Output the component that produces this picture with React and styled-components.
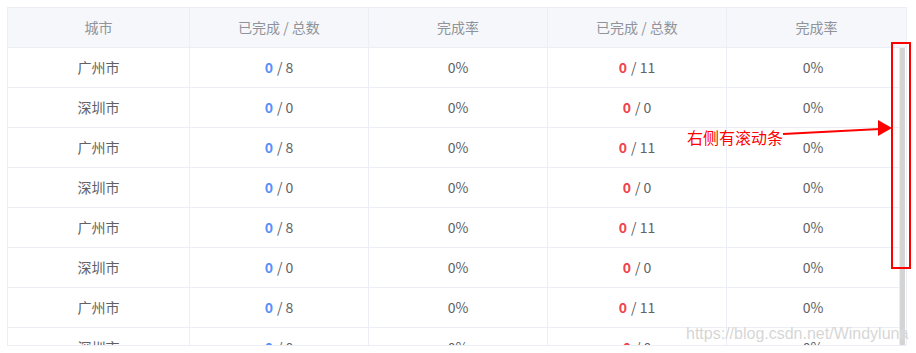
import React from "react";
import styled, { createGlobalStyle } from "styled-components";

const GlobalStyle = createGlobalStyle`
  html, body {
    margin: 0;
    padding: 0;
    background: #fff;
  }
  body {
    font-family: "Noto Sans CJK SC", "Noto Sans", sans-serif;
  }
`;

const Page = styled.div`
  position: relative;
  width: 916px;
  height: 353px;
  padding: 7px 0 0 7px;
  box-sizing: border-box;
  overflow: hidden;
`;

const TableWrap = styled.div`
  width: 900px;
  border: 1px solid #ebeef5;
  box-sizing: border-box;
  display: flex;
  flex-direction: column;
`;

const HeaderRow = styled.div`
  display: grid;
  grid-template-columns: 182px 179px 179px 179px 1fr;
  height: 40px;
  background: #f5f7fa;
  border-bottom: 1px solid #ebeef5;
  box-sizing: border-box;
`;

const HeadCell = styled.div`
  display: flex;
  align-items: center;
  justify-content: center;
  padding-bottom: 2px;
  font-size: 14px;
  color: #909399;
  border-right: ${(p) => (p.$last ? "none" : "1px solid #ebeef5")};
  box-sizing: border-box;
`;

const BodyArea = styled.div`
  display: flex;
  height: 297px;
  overflow: hidden;
`;

const Rows = styled.div`
  flex: 1;
  display: flex;
  flex-direction: column;
`;

const Row = styled.div`
  display: grid;
  grid-template-columns: 182px 179px 179px 179px 1fr;
  flex: 0 0 40px;
  border-bottom: 1px solid #ebeef5;
  box-sizing: border-box;
`;

const Cell = styled.div`
  display: flex;
  align-items: center;
  justify-content: center;
  padding-bottom: 2px;
  font-size: 14px;
  color: #606266;
  border-right: 1px solid #ebeef5;
  box-sizing: border-box;
`;

const Done = styled.span`
  font-weight: bold;
  color: ${(p) => p.$color};
  margin-right: 4px;
`;

const ScrollTrack = styled.div`
  width: 6px;
  display: flex;
  flex-direction: column;
`;

const ScrollThumb = styled.div`
  flex: 1;
  width: 5px;
  background: #d4d4d4;
`;

const Note = styled.div`
  position: absolute;
  left: 687px;
  top: 127px;
  font-size: 16px;
  line-height: 20px;
  color: #ff0000;
`;

const Mark = styled.div`
  position: absolute;
  left: 891px;
  top: 42px;
  width: 20px;
  height: 227px;
  border: 2px solid #ff0000;
  box-sizing: border-box;
`;

const ArrowSvg = styled.svg`
  position: absolute;
  left: 780px;
  top: 116px;
`;

const Watermark = styled.div`
  position: absolute;
  left: 686px;
  top: 325px;
  font-family: "Liberation Sans", Arial, sans-serif;
  font-size: 16px;
  color: rgba(200, 200, 200, 0.75);
  text-shadow: 0 0 1px #fff;
`;

const cities = [
  { name: "广州市", a: 8, b: 11 },
  { name: "深圳市", a: 0, b: 0 },
];

const rows = Array.from({ length: 8 }, (_, i) => cities[i % 2]);

export default function App() {
  return (
    <Page>
      <GlobalStyle />
      <TableWrap>
        <HeaderRow>
          <HeadCell>城市</HeadCell>
          <HeadCell>已完成 / 总数</HeadCell>
          <HeadCell>完成率</HeadCell>
          <HeadCell>已完成 / 总数</HeadCell>
          <HeadCell $last>完成率</HeadCell>
        </HeaderRow>
        <BodyArea>
          <Rows>
            {rows.map((r, i) => (
              <Row key={i}>
                <Cell>{r.name}</Cell>
                <Cell>
                  <Done $color="#5b8ff9">0</Done>/ {r.a}
                </Cell>
                <Cell>0%</Cell>
                <Cell>
                  <Done $color="#f0434f">0</Done>/ {r.b}
                </Cell>
                <Cell>0%</Cell>
              </Row>
            ))}
          </Rows>
          <ScrollTrack>
            <ScrollThumb />
          </ScrollTrack>
        </BodyArea>
      </TableWrap>

      <Note>右侧有滚动条</Note>
      <ArrowSvg width="114" height="24" viewBox="0 0 114 24">
        <line x1="3" y1="18" x2="100" y2="13" stroke="#ff0000" strokeWidth="2" />
        <polygon points="98,4 98,20 112,12" fill="#ff0000" />
      </ArrowSvg>
      <Mark />
      <Watermark>https://blog.csdn.net/Windyluna</Watermark>
    </Page>
  );
}
